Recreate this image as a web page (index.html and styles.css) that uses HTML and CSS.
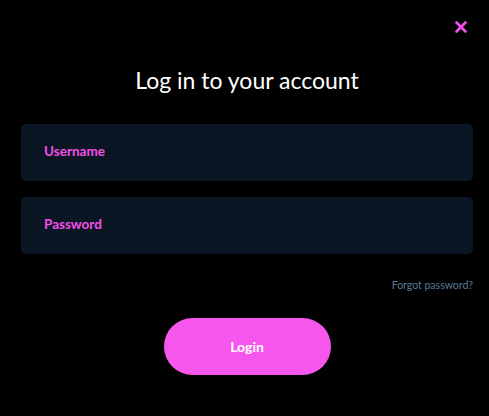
FILE: index.html
```html
<!DOCTYPE html>
<html>
<head>
<meta charset="utf-8">
<link rel="stylesheet" href="styles.css">
</head>
<body>
<div class="modal">
  <div class="top">
    <button class="close" aria-label="Close">
      <svg width="12" height="12" viewBox="0 0 12 12"><path d="M1.5 1.5 L10.5 10.5 M10.5 1.5 L1.5 10.5" stroke="#f54fe9" stroke-width="2.6" stroke-linecap="round"/></svg>
    </button>
  </div>
  <h1 class="title">Log in to your account</h1>
  <div class="field"><span class="label">Username</span></div>
  <div class="field"><span class="label">Password</span></div>
  <div class="forgot-row"><a class="forgot">Forgot password?</a></div>
  <div class="btn-row"><button class="login">Login</button></div>
</div>
</body>
</html>
```
FILE: styles.css
```css
html, body {
  margin: 0;
  padding: 0;
  background: #000;
  height: 100%;
}
body {
  font-family: Lato, "Noto Sans", sans-serif;
  color: #fff;
}
.modal {
  padding: 0 16px 0 21px;
}
.top {
  display: flex;
  justify-content: flex-end;
  height: 54px;
  align-items: flex-start;
}
.close {
  background: none;
  border: 0;
  padding: 0;
  margin-top: 21px;
  margin-right: 6px;
  width: 12px;
  height: 12px;
  display: flex;
}
.title {
  margin: 0;
  text-align: center;
  font-weight: 400;
  font-size: 23px;
  line-height: 40px;
  padding-top: 6px;
  height: 64px;
}
.field {
  background: #0a1623;
  border-radius: 5px;
  height: 53px;
  padding-bottom: 4px;
  display: flex;
  align-items: center;
  padding-left: 23px;
  margin-bottom: 16px;
}
.label {
  color: #f54fe9;
  font-weight: 700;
  font-size: 13.5px;
}
.forgot-row {
  display: flex;
  justify-content: flex-end;
  height: 48px;
}
.forgot {
  color: #5a7896;
  font-size: 10.5px;
  line-height: 16px;
  margin-top: 7px;
}
.btn-row {
  display: flex;
  justify-content: center;
}
.login {
  width: 167px;
  height: 57px;
  border: 0;
  border-radius: 29px;
  background: #f656ec;
  color: #fff;
  font-family: Lato, "Noto Sans", sans-serif;
  font-weight: 700;
  font-size: 14px;
}
```
